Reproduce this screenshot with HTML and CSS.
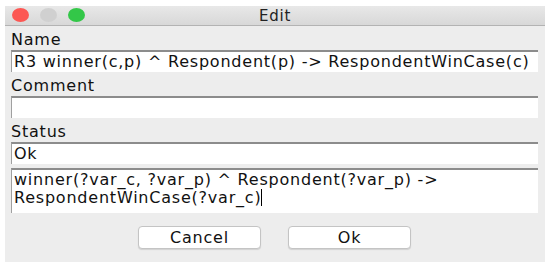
FILE: index.html
```html
<!doctype html>
<html lang="en">
<head>
    <meta charset="UTF-8">
    <title>Edit</title>
    <link rel="stylesheet" href="styles.css">
</head>
<body>
    <div class="window">
        <div class="title-bar">
            <div class="lights">
                <span class="light red"></span>
                <span class="light gray"></span>
                <span class="light green"></span>
            </div>
            <div class="title">Edit</div>
        </div>
        <div class="content">
            <div class="label">Name</div>
            <div class="field">R3 winner(c,p) ^ Respondent(p) -&gt; RespondentWinCase(c)</div>
            <div class="label">Comment</div>
            <div class="field"></div>
            <div class="label">Status</div>
            <div class="field">Ok</div>
            <div class="area">winner(?var_c, ?var_p) ^ Respondent(?var_p) -&gt;<br>RespondentWinCase(?var_c)<span class="caret"></span></div>
            <div class="buttons">
                <div class="button">Cancel</div>
                <div class="button">Ok</div>
            </div>
        </div>
    </div>
</body>
</html>
```

FILE: styles.css
```css
html,body{
    margin: 0;
    padding: 0;
    background: #ffffff;
    font-family: "DejaVu Sans", sans-serif;
    color: #111;
    letter-spacing: 0.78px;
}
.window{
    margin: 6px 5px 0;
    height: 256px;
    background: #ededed;
    display: flex;
    flex-direction: column;
}
.title-bar{
    position: relative;
    height: 19px;
    background: linear-gradient(#e8e8e8, #d8d8d8);
    border-bottom: 1px solid #b3b3b3;
    display: flex;
    align-items: center;
    justify-content: center;
}
.lights{
    position: absolute;
    left: 7px;
    top: 2px;
    display: flex;
    gap: 11px;
}
.light{
    width: 17px;
    height: 14px;
    border-radius: 50%;
}
.light.red{
    background: #fc5753;
}
.light.gray{
    background: #d0d0d0;
}
.light.green{
    background: #33c748;
}
.title{
    font-size: 15px;
    color: #222;
}
.content{
    padding: 0 7px 0 6px;
    display: flex;
    flex-direction: column;
}
.label{
    height: 24px;
    line-height: 20px;
    font-size: 16px;
    display: flex;
    align-items: flex-end;
}
.field{
    height: 20px;
    line-height: 20px;
    background: #fff;
    border-top: 2px solid #8c8c8c;
    border-left: 1px solid #a0a0a0;
    padding-left: 2px;
    font-size: 16px;
    white-space: nowrap;
}
.area{
    margin-top: 4px;
    height: 42px;
    background: #fff;
    border-top: 2px solid #8c8c8c;
    border-left: 1px solid #a0a0a0;
    padding: 1px 0 0 2px;
    font-size: 16px;
    line-height: 18px;
}
.caret{
    display: inline-block;
    width: 1px;
    height: 17px;
    background: #000;
    vertical-align: -3px;
}
.buttons{
    margin-top: 13px;
    display: flex;
    justify-content: center;
    gap: 27px;
}
.button{
    width: 121px;
    height: 21px;
    line-height: 21px;
    background: #fff;
    border: 1px solid #c4c4c4;
    border-radius: 4px;
    box-shadow: 0 1px 1px rgba(0,0,0,0.12);
    text-align: center;
    font-size: 16px;
}
```
